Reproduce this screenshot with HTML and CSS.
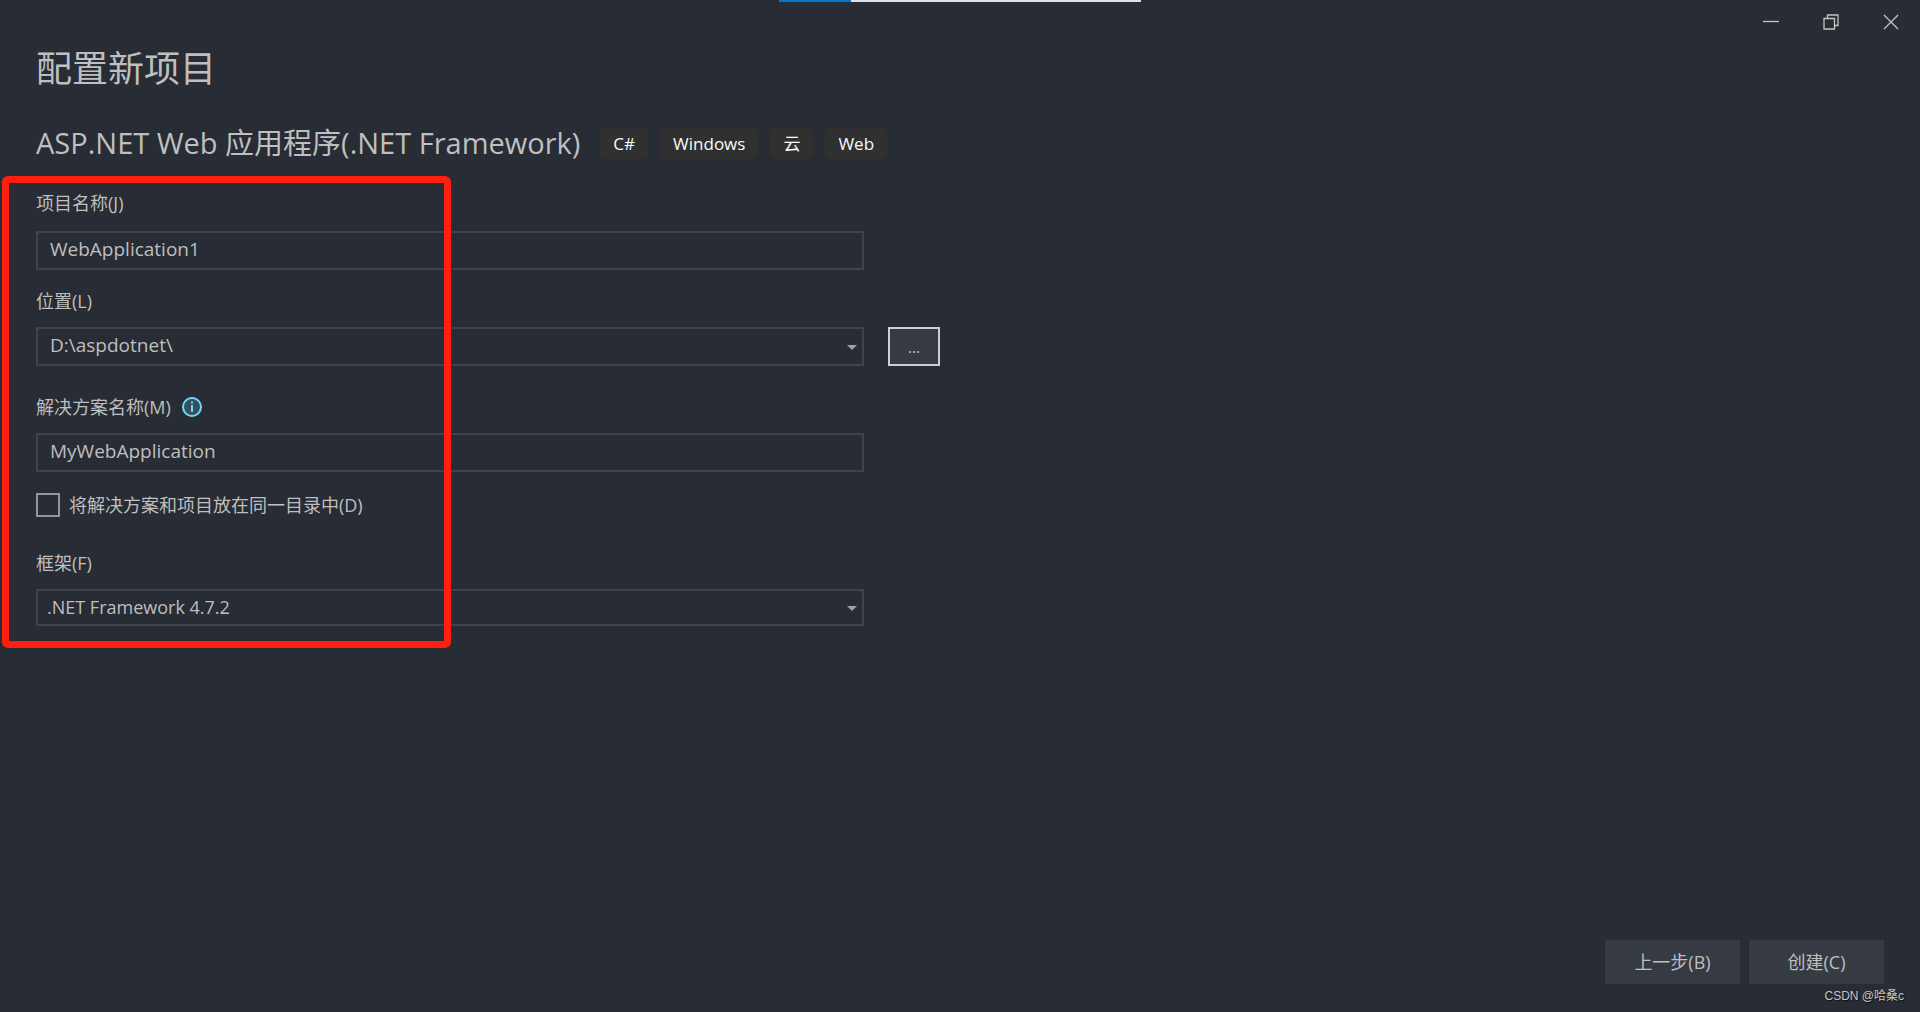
FILE: index.html
```html
<!DOCTYPE html>
<html lang="zh-CN">
<head>
<meta charset="utf-8">
<title>配置新项目</title>
<link rel="stylesheet" href="styles.css">
</head>
<body>
<div class="window">
  <div class="progress"><div class="progress-value"></div></div>
  <header class="titlebar">
    <button class="window-button" type="button" aria-label="最小化">
      <svg width="16" height="16" viewBox="0 0 16 16"><path d="M0 7.5H16"/></svg>
    </button>
    <button class="window-button" type="button" aria-label="还原">
      <svg width="16" height="16" viewBox="0 0 16 16"><path d="M1 4.5H11.5V15H1ZM4.5 4.5V1H15V11.5H11.5"/></svg>
    </button>
    <button class="window-button" type="button" aria-label="关闭">
      <svg width="16" height="16" viewBox="0 0 16 16"><path d="M1 1L15 15M15 1L1 15"/></svg>
    </button>
  </header>
  <main class="content">
    <h1 class="title">配置新项目</h1>
    <div class="template">
      <h2 class="template-name">ASP.NET Web 应用程序(.NET Framework)</h2>
      <ul class="tags">
        <li class="tag">C#</li>
        <li class="tag">Windows</li>
        <li class="tag">云</li>
        <li class="tag">Web</li>
      </ul>
    </div>
    <form class="form" id="project">
      <div class="field project-name">
        <label class="label" for="name">项目名称(J)</label>
        <input class="control" id="name" type="text" value="WebApplication1">
      </div>
      <div class="field location">
        <label class="label" for="location">位置(L)</label>
        <div class="row">
          <div class="select">
            <select class="control" id="location"><option>D:\aspdotnet\</option></select>
          </div>
          <button class="browse" type="button">...</button>
        </div>
      </div>
      <div class="field">
        <div class="label-row">
          <label class="label" for="solution">解决方案名称(M)</label>
          <svg class="info" width="20" height="20" viewBox="0 0 20 20"><circle cx="10" cy="10" r="9"/><path d="M9 4.500h2v2H9zM9 8h2v7H9z"/></svg>
        </div>
        <input class="control" id="solution" type="text" value="MyWebApplication">
      </div>
      <div class="check-row">
        <input class="check" id="same" type="checkbox">
        <label class="label" for="same">将解决方案和项目放在同一目录中(D)</label>
      </div>
      <div class="field">
        <label class="label" for="framework">框架(F)</label>
        <div class="select">
          <select class="control framework" id="framework"><option>.NET Framework 4.7.2</option></select>
        </div>
      </div>
    </form>
  </main>
  <footer class="actions">
    <button class="action" type="button">上一步(B)</button>
    <button class="action" type="submit" form="project">创建(C)</button>
  </footer>
  <div class="highlight"></div>
  <div class="watermark">CSDN @哈桑c</div>
</div>
</body>
</html>
```
FILE: styles.css
```css
* {
  box-sizing: border-box;
}

body {
  margin: 0;
  background: #282c34;
  color: #bfbfbf;
  font: 18px/24px "Open Sans", "Noto Sans CJK SC", sans-serif;
}

button,
input,
select {
  margin: 0;
  font: inherit;
  color: inherit;
}

.window {
  position: relative;
  display: flex;
  flex-direction: column;
  min-height: 100vh;
}

.progress {
  position: absolute;
  top: 0;
  left: 50%;
  width: 362px;
  height: 2px;
  margin-left: -181px;
  background: #dfe2e4;
}

.progress-value {
  width: 20%;
  height: 100%;
  background: #0578d4;
}

.titlebar {
  display: flex;
  justify-content: flex-end;
}

.window-button {
  display: flex;
  align-items: center;
  justify-content: center;
  width: 60px;
  height: 44px;
  padding: 0 0 0 2px;
  border: 0;
  background: none;
}

.window-button svg {
  fill: none;
  stroke: #c4c4c4;
  stroke-width: 1.300;
}

.content {
  flex: 1;
  padding: 1px 36px 0;
}

.title {
  margin: 0;
  font-size: 36px;
  line-height: 48px;
  font-weight: 400;
}

.template {
  display: flex;
  flex-wrap: wrap;
  align-items: center;
  gap: 20px;
  margin-top: 30px;
}

.template-name {
  margin: 0;
  font-size: 29px;
  line-height: 40px;
  font-weight: 400;
}

.tags {
  display: flex;
  gap: 12px;
  margin: 0;
  padding: 0;
  list-style: none;
}

.tag {
  padding: 4px 13px;
  border-radius: 6px;
  background: #303030;
  color: #fafafa;
  font-size: 17px;
  line-height: 23px;
}

.form {
  display: flex;
  flex-direction: column;
  margin-top: 28px;
}

.field {
  display: flex;
  flex-direction: column;
  gap: 14px;
  width: 828px;
  max-width: 100%;
}

.project-name {
  gap: 16px;
}

.location {
  margin: 19px 0 29px;
}

.row {
  display: flex;
  gap: 24px;
}

.row .select {
  flex: 0 0 100%;
}

.label-row {
  display: flex;
  align-items: center;
  gap: 11px;
}

.info {
  fill: #74d6f7;
}

.info circle {
  fill: #34505c;
  stroke: #74d6f7;
  stroke-width: 2;
}

.control {
  width: 100%;
  height: 39px;
  padding: 0 12px 3px;
  border: 2px solid #3f434a;
  border-radius: 0;
  background: none;
  outline: 0;
  font-size: 19px;
  appearance: none;
}

.framework {
  height: 37px;
  padding: 0 9px 2px;
  font-size: 18px;
}

.select {
  position: relative;
  display: flex;
}

.select::after {
  content: "";
  position: absolute;
  top: 50%;
  right: 7px;
  margin-top: -2px;
  border: 5px solid transparent;
  border-top-color: #a0a2a5;
  border-bottom: 0;
  pointer-events: none;
}

.browse {
  flex: 0 0 52px;
  padding: 0;
  border: 2px solid #cfcfcf;
  background: #363a43;
  font-size: 16px;
}

.check-row {
  display: flex;
  align-items: center;
  gap: 9px;
  margin: 21px 0 34px;
}

.check {
  width: 24px;
  height: 24px;
  border: 2px solid #939598;
  appearance: none;
}

.actions {
  display: flex;
  justify-content: flex-end;
  gap: 9px;
  padding: 28px 36px;
}

.action {
  width: 135px;
  height: 44px;
  padding: 0;
  border: 0;
  background: #363a43;
}

.highlight {
  position: absolute;
  top: 176px;
  left: 2px;
  width: 449px;
  height: 472px;
  border: 7px solid #ff1e10;
  border-radius: 6px;
  pointer-events: none;
}

.watermark {
  position: absolute;
  right: 16px;
  bottom: 6px;
  color: #c6c6c6;
  font: 12px/20px "Liberation Sans", "Noto Sans CJK SC", sans-serif;
  text-shadow: 1px 1px 1px #111;
}
```
